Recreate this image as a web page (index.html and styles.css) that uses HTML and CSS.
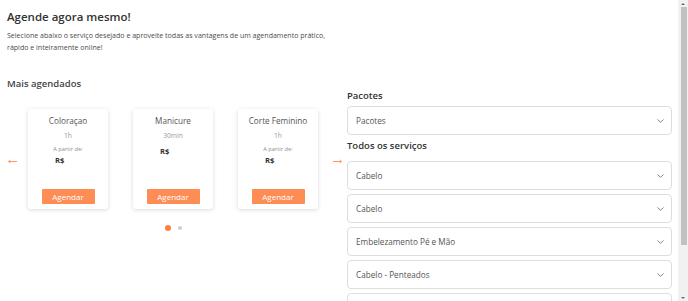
FILE: index.html
```html
<!DOCTYPE html>
<html lang="pt-BR">
<head>
<meta charset="utf-8">
<title>Agende agora mesmo!</title>
<link rel="stylesheet" href="styles.css">
</head>
<body>
<div class="window">
  <div class="page">
    <div class="col-left">
      <h1 class="title">Agende agora mesmo!</h1>
      <p class="intro">Selecione abaixo o serviço desejado e aproveite todas as vantagens de um agendamento prático, rápido e inteiramente online!</p>
      <h2 class="section-title">Mais agendados</h2>
      <div class="carousel">
        <button class="arrow arrow-prev" aria-label="Anterior">
          <svg width="9" height="5" viewBox="0 0 9 5"><path d="M0.5 2.5H9M0.5 2.5L2.5 1M0.5 2.5L2.5 4" fill="none" stroke="#fb9a62" stroke-width="1"/></svg>
        </button>
        <div class="cards">
          <div class="card">
            <div class="card-title">Coloraçao</div>
            <div class="card-time">1h</div>
            <div class="card-from">A partir de:</div>
            <div class="card-price">R$</div>
            <button class="card-btn">Agendar</button>
          </div>
          <div class="card">
            <div class="card-title">Manicure</div>
            <div class="card-time">30min</div>
            <div class="card-price card-price--solo">R$</div>
            <button class="card-btn">Agendar</button>
          </div>
          <div class="card">
            <div class="card-title">Corte Feminino</div>
            <div class="card-time">1h</div>
            <div class="card-from">A partir de:</div>
            <div class="card-price">R$</div>
            <button class="card-btn">Agendar</button>
          </div>
        </div>
        <button class="arrow arrow-next" aria-label="Próximo">
          <svg width="9" height="5" viewBox="0 0 9 5"><path d="M0 2.5H8.5M8.5 2.5L6.5 1M8.5 2.5L6.5 4" fill="none" stroke="#fb9a62" stroke-width="1"/></svg>
        </button>
      </div>
      <div class="dots">
        <span class="dot dot--active"></span>
        <span class="dot"></span>
      </div>
    </div>
    <div class="col-right">
      <h3 class="label">Pacotes</h3>
      <div class="select">
        <span>Pacotes</span>
        <svg class="chev" width="7" height="4" viewBox="0 0 7 4"><path d="M0.5 0.5L3.5 3.3L6.5 0.5" fill="none" stroke="#777" stroke-width="0.9"/></svg>
      </div>
      <h3 class="label label--services">Todos os serviços</h3>
      <div class="select-list">
        <div class="select"><span>Cabelo</span><svg class="chev" width="7" height="4" viewBox="0 0 7 4"><path d="M0.5 0.5L3.5 3.3L6.5 0.5" fill="none" stroke="#777" stroke-width="0.9"/></svg></div>
        <div class="select"><span>Cabelo</span><svg class="chev" width="7" height="4" viewBox="0 0 7 4"><path d="M0.5 0.5L3.5 3.3L6.5 0.5" fill="none" stroke="#777" stroke-width="0.9"/></svg></div>
        <div class="select"><span>Embelezamento Pé e Mão</span><svg class="chev" width="7" height="4" viewBox="0 0 7 4"><path d="M0.5 0.5L3.5 3.3L6.5 0.5" fill="none" stroke="#777" stroke-width="0.9"/></svg></div>
        <div class="select"><span>Cabelo - Penteados</span><svg class="chev" width="7" height="4" viewBox="0 0 7 4"><path d="M0.5 0.5L3.5 3.3L6.5 0.5" fill="none" stroke="#777" stroke-width="0.9"/></svg></div>
        <div class="select select--partial"></div>
      </div>
    </div>
  </div>
  <div class="scrollbar" aria-hidden="true">
    <span class="sb-btn sb-btn--up"></span>
    <span class="sb-thumb"></span>
    <span class="sb-space"></span>
    <span class="sb-btn sb-btn--down"></span>
  </div>
</div>
</body>
</html>
```

FILE: styles.css
```css
html,
body {
  margin: 0;
  background: #fff;
}

body {
  font-family: "Open Sans", "Liberation Sans", sans-serif;
  color: #333;
}

.window {
  display: flex;
  height: 301px;
  overflow: hidden;
}

.page {
  flex: 1;
  min-width: 0;
  display: grid;
  grid-template-columns: 340px 1fr;
  align-items: start;
  padding: 0 6px 0 7px;
}

/* fake browser scrollbar */
.scrollbar {
  width: 10px;
  flex: none;
  background: #f1f1f1;
  display: flex;
  flex-direction: column;
  align-items: center;
}
.sb-btn {
  height: 7px;
  width: 10px;
  display: flex;
  justify-content: center;
  align-items: center;
}
.sb-btn::before {
  content: "";
  width: 0;
  height: 0;
  border-left: 2px solid transparent;
  border-right: 2px solid transparent;
}
.sb-btn--up::before {
  border-bottom: 2px solid #6a6a6a;
}
.sb-btn--down::before {
  border-top: 2px solid #6a6a6a;
}
.sb-thumb {
  width: 6px;
  height: 238px;
  margin-left: 1px;
  background: #c1c1c1;
}
.sb-space {
  flex: 1;
}

.col-left {
  display: flex;
  flex-direction: column;
}

.title {
  margin: 9px 0 0;
  font-size: 11.5px;
  line-height: 16px;
  font-weight: 600;
  color: #333;
}

.intro {
  margin: 4px 0 0;
  max-width: 322px;
  font-size: 7.05px;
  line-height: 12px;
  color: #4a4a4a;
}

.section-title {
  margin: 23.5px 0 0;
  font-size: 9.5px;
  line-height: 13px;
  font-weight: 600;
  color: #444;
}

.carousel {
  margin-top: 19.5px;
  display: flex;
  align-items: center;
}

.arrow {
  padding: 0;
  border: 0;
  background: none;
  display: flex;
  width: 9px;
  height: 5px;
  margin-top: 4px;
}
.arrow-prev {
  margin-left: 1px;
  margin-right: 11px;
}
.arrow-next {
  margin-left: 15px;
}

.cards {
  display: flex;
  gap: 25px;
}

.card {
  width: 80px;
  height: 100px;
  box-sizing: border-box;
  background: #fff;
  border-radius: 3px;
  box-shadow: 0 1px 4px rgba(0, 0, 0, 0.15);
  display: flex;
  flex-direction: column;
  align-items: center;
  padding: 6px 0 5px;
}

.card-title {
  font-size: 8.2px;
  line-height: 11px;
  color: #555;
}

.card-time {
  margin-top: 4.5px;
  font-size: 6.7px;
  line-height: 9px;
  color: #9a9a9a;
}

.card-from {
  margin-top: 5px;
  font-size: 5.7px;
  line-height: 8px;
  color: #8a8a8a;
}

.card-price {
  align-self: stretch;
  padding-left: 27px;
  margin-top: 2px;
  font-size: 7.6px;
  line-height: 10px;
  font-weight: 700;
  color: #333;
}
.card-price--solo {
  margin-top: 6px;
}

.card-btn {
  margin-top: auto;
  width: 53px;
  height: 15px;
  padding: 0;
  border: 0;
  border-radius: 1px;
  background: #fd8c55;
  color: #fff;
  font-family: "Open Sans", "Liberation Sans", sans-serif;
  font-size: 8px;
  line-height: 15px;
}

.dots {
  margin: 16px 0 0 21px;
  width: 290px;
  display: flex;
  justify-content: center;
  align-items: center;
  gap: 7px;
}
.dot {
  width: 4px;
  height: 4px;
  border-radius: 50%;
  background: #cfcfcf;
}
.dot--active {
  width: 6px;
  height: 6px;
  background: #fd8040;
}

.col-right {
  padding-top: 89px;
  display: flex;
  flex-direction: column;
}

.label {
  margin: 0;
  font-size: 9.5px;
  line-height: 13px;
  font-weight: 600;
  color: #333;
}
.label--services {
  margin-top: 4px;
}

.select {
  margin-top: 4px;
  height: 29px;
  box-sizing: border-box;
  border: 1px solid #dedede;
  border-radius: 4px;
  background: #fff;
  padding: 0 7px 0 8px;
  display: flex;
  align-items: center;
  justify-content: space-between;
  font-size: 8.2px;
  color: #555;
  flex: none;
}

.select-list {
  margin-top: 5px;
  display: flex;
  flex-direction: column;
}
```
